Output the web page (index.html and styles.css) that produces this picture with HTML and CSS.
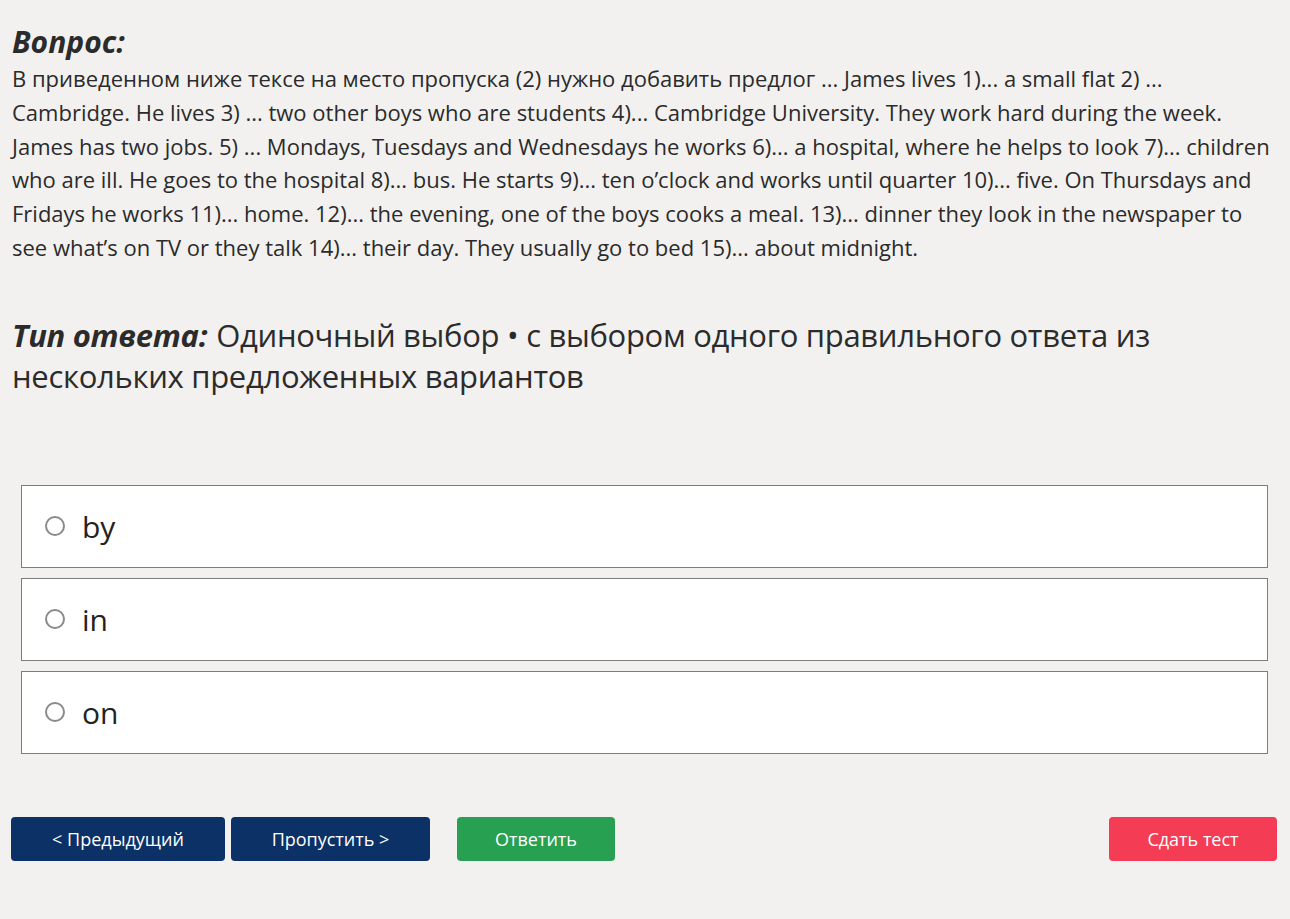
FILE: index.html
```html
<!DOCTYPE html>
<html lang="ru">
<head>
<meta charset="utf-8">
<link rel="stylesheet" href="styles.css">
</head>
<body>
<main class="page">
  <h2 class="q-title">Вопрос:</h2>
  <p class="q-text">В приведенном ниже тексе на место пропуска (2) нужно добавить предлог ... James lives 1)... a small flat 2) ... Cambridge. He lives 3) ... two other boys who are students 4)... Cambridge University. They work hard during the week. James has two jobs. 5) ... Mondays, Tuesdays and Wednesdays he works 6)... a hospital, where he helps to look 7)... children who are ill. He goes to the hospital 8)... bus. He starts 9)... ten o’clock and works until quarter 10)... five. On Thursdays and Fridays he works 11)... home. 12)... the evening, one of the boys cooks a meal. 13)... dinner they look in the newspaper to see what’s on TV or they talk 14)... their day. They usually go to bed 15)... about midnight.</p>
  <p class="q-type"><b class="q-type-label">Тип ответа:</b><span class="q-type-value">Одиночный выбор • с выбором одного правильного ответа из нескольких предложенных вариантов</span></p>
  <div class="options">
    <label class="option"><span class="radio"></span><span class="opt-text">by</span></label>
    <label class="option"><span class="radio"></span><span class="opt-text">in</span></label>
    <label class="option"><span class="radio"></span><span class="opt-text">on</span></label>
  </div>
  <div class="actions">
    <button class="btn btn-navy btn-prev">&lt; Предыдущий</button>
    <button class="btn btn-navy btn-skip">Пропустить &gt;</button>
    <button class="btn btn-green btn-answer">Ответить</button>
    <span class="spacer"></span>
    <button class="btn btn-red btn-submit">Сдать тест</button>
  </div>
</main>
</body>
</html>
```

FILE: styles.css
```css
html, body {
  margin: 0;
  padding: 0;
  background: #f2f1ef;
}
body {
  font-family: "Open Sans", "Noto Sans", sans-serif;
  color: #2b2b2b;
}
.page {
  padding: 22px 16px 0 12px;
}
.q-title {
  margin: 0;
  font-size: 30px;
  line-height: 40px;
  font-weight: 700;
  font-style: italic;
}
.q-text {
  margin: 0;
  font-size: 22px;
  line-height: 33.8px;
  letter-spacing: 0;
}
.q-type {
  margin: 50px 0 0;
  font-size: 31px;
  line-height: 41px;
  letter-spacing: -0.3px;
}
.q-type-label {
  font-style: italic;
  margin-right: 9px;
}
.options {
  margin: 88px 6px 0 9px;
  display: flex;
  flex-direction: column;
  gap: 10px;
}
.option {
  display: flex;
  align-items: center;
  height: 81px;
  background: #fff;
  border: 1px solid #7d7d7d;
  padding-left: 23px;
}
.radio {
  width: 20px;
  height: 20px;
  box-sizing: border-box;
  border: 2px solid #8a8a8a;
  border-radius: 50%;
  margin-right: 17px;
}
.opt-text {
  font-size: 30px;
  color: #222;
}
.actions {
  display: flex;
  align-items: center;
  margin-top: 63px;
  margin-left: -1px;
  margin-right: -3px;
}
.btn {
  height: 44px;
  border: none;
  border-radius: 4px;
  color: #fff;
  font-family: "Open Sans", "Noto Sans", sans-serif;
  font-size: 18px;
  cursor: pointer;
}
.btn-navy { background: #0c3166; }
.btn-green { background: #27a052; }
.btn-red { background: #f43c55; }
.btn-prev { width: 214px; }
.btn-skip { width: 199px; margin-left: 6px; }
.btn-answer { width: 158px; margin-left: 27px; }
.spacer { flex: 1; }
.btn-submit { width: 168px; }
```
